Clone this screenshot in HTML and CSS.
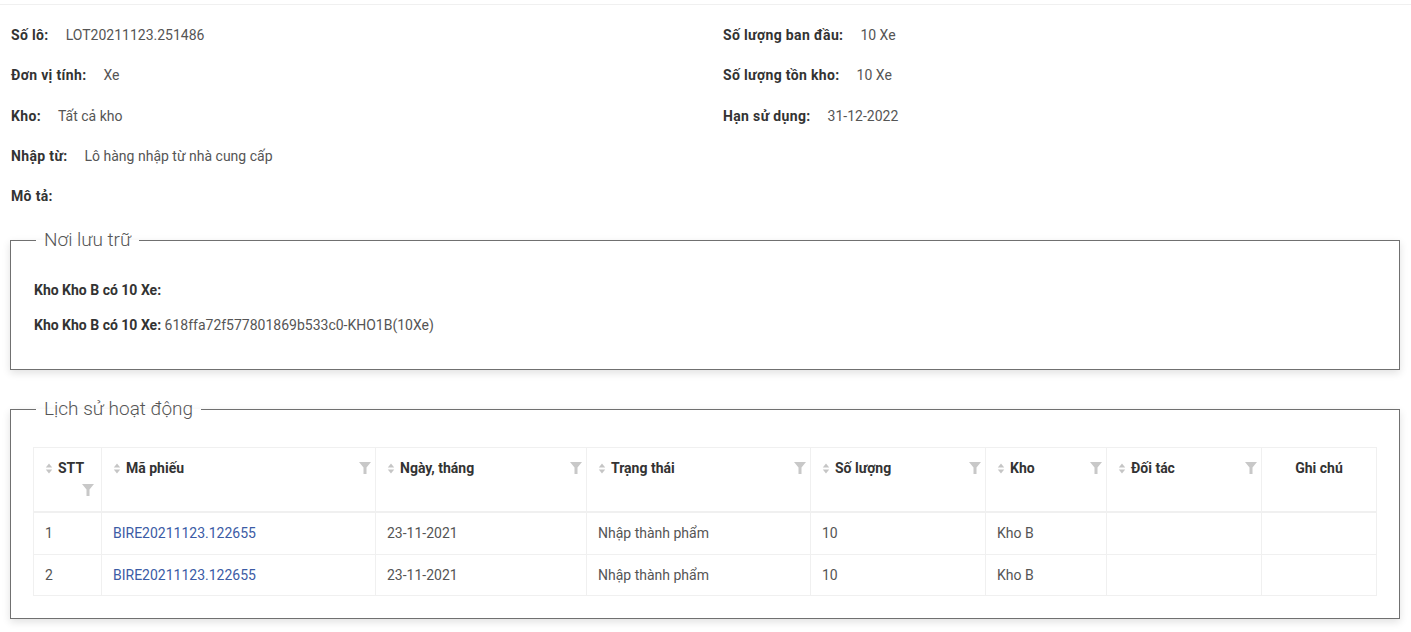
FILE: index.html
```html
<!DOCTYPE html>
<html lang="vi">
<head>
<meta charset="utf-8">
<title>Chi tiết lô hàng</title>
<link rel="stylesheet" href="styles.css">
</head>
<body>
<div class="page">
  <div class="topline"></div>
  <div class="info">
    <div class="info-col">
      <div class="info-row"><span class="lbl">Số lô:</span><span class="val">LOT20211123.251486</span></div>
      <div class="info-row"><span class="lbl">Đơn vị tính:</span><span class="val">Xe</span></div>
      <div class="info-row"><span class="lbl">Kho:</span><span class="val">Tất cả kho</span></div>
      <div class="info-row"><span class="lbl">Nhập từ:</span><span class="val">Lô hàng nhập từ nhà cung cấp</span></div>
      <div class="info-row"><span class="lbl">Mô tả:</span><span class="val"></span></div>
    </div>
    <div class="info-col">
      <div class="info-row"><span class="lbl">Số lượng ban đầu:</span><span class="val">10 Xe</span></div>
      <div class="info-row"><span class="lbl">Số lượng tồn kho:</span><span class="val">10 Xe</span></div>
      <div class="info-row"><span class="lbl">Hạn sử dụng:</span><span class="val">31-12-2022</span></div>
    </div>
  </div>

  <fieldset class="box box-storage">
    <legend>Nơi lưu trữ</legend>
    <div class="storage-line"><b>Kho Kho B có 10 Xe:</b></div>
    <div class="storage-line"><b>Kho Kho B có 10 Xe:</b> 618ffa72f577801869b533c0-KHO1B(10Xe)</div>
  </fieldset>

  <fieldset class="box box-history">
    <legend>Lịch sử hoạt động</legend>
    <table class="tbl">
      <colgroup>
        <col style="width:68px"><col style="width:274px"><col style="width:211px"><col style="width:224px">
        <col style="width:175px"><col style="width:121px"><col style="width:155px"><col style="width:115px">
      </colgroup>
      <thead>
        <tr>
          <th><div class="th-in wrap"><span class="th-title"><svg class="sorter" viewBox="0 0 8 12"><path d="M4 0.5L7.5 5H0.5z"/><path d="M4 11.5L7.5 7H0.5z"/></svg>STT</span><svg class="filter" viewBox="0 0 12 12"><path d="M0 0H12L7.5 5.5V12H4.5V5.5Z"/></svg></div></th>
          <th><div class="th-in"><span class="th-title"><svg class="sorter" viewBox="0 0 8 12"><path d="M4 0.5L7.5 5H0.5z"/><path d="M4 11.5L7.5 7H0.5z"/></svg>Mã phiếu</span><svg class="filter" viewBox="0 0 12 12"><path d="M0 0H12L7.5 5.5V12H4.5V5.5Z"/></svg></div></th>
          <th><div class="th-in"><span class="th-title"><svg class="sorter" viewBox="0 0 8 12"><path d="M4 0.5L7.5 5H0.5z"/><path d="M4 11.5L7.5 7H0.5z"/></svg>Ngày, tháng</span><svg class="filter" viewBox="0 0 12 12"><path d="M0 0H12L7.5 5.5V12H4.5V5.5Z"/></svg></div></th>
          <th><div class="th-in"><span class="th-title"><svg class="sorter" viewBox="0 0 8 12"><path d="M4 0.5L7.5 5H0.5z"/><path d="M4 11.5L7.5 7H0.5z"/></svg>Trạng thái</span><svg class="filter" viewBox="0 0 12 12"><path d="M0 0H12L7.5 5.5V12H4.5V5.5Z"/></svg></div></th>
          <th><div class="th-in"><span class="th-title"><svg class="sorter" viewBox="0 0 8 12"><path d="M4 0.5L7.5 5H0.5z"/><path d="M4 11.5L7.5 7H0.5z"/></svg>Số lượng</span><svg class="filter" viewBox="0 0 12 12"><path d="M0 0H12L7.5 5.5V12H4.5V5.5Z"/></svg></div></th>
          <th><div class="th-in"><span class="th-title"><svg class="sorter" viewBox="0 0 8 12"><path d="M4 0.5L7.5 5H0.5z"/><path d="M4 11.5L7.5 7H0.5z"/></svg>Kho</span><svg class="filter" viewBox="0 0 12 12"><path d="M0 0H12L7.5 5.5V12H4.5V5.5Z"/></svg></div></th>
          <th><div class="th-in"><span class="th-title"><svg class="sorter" viewBox="0 0 8 12"><path d="M4 0.5L7.5 5H0.5z"/><path d="M4 11.5L7.5 7H0.5z"/></svg>Đối tác</span><svg class="filter" viewBox="0 0 12 12"><path d="M0 0H12L7.5 5.5V12H4.5V5.5Z"/></svg></div></th>
          <th class="center">Ghi chú</th>
        </tr>
      </thead>
      <tbody>
        <tr>
          <td>1</td><td><a class="link" href="#">BIRE20211123.122655</a></td><td>23-11-2021</td><td>Nhập thành phẩm</td><td>10</td><td>Kho B</td><td></td><td></td>
        </tr>
        <tr>
          <td>2</td><td><a class="link" href="#">BIRE20211123.122655</a></td><td>23-11-2021</td><td>Nhập thành phẩm</td><td>10</td><td>Kho B</td><td></td><td></td>
        </tr>
      </tbody>
    </table>
  </fieldset>
</div>
</body>
</html>
```

FILE: styles.css
```css
* { box-sizing: border-box; }
html, body { margin: 0; padding: 0; background: #fff; }
body {
  font-family: Roboto, "Liberation Sans", sans-serif;
  font-size: 14px;
  color: #555;
}
.page { padding: 0 11px 20px 10px; }
.topline { height: 5px; border-bottom: 1px solid #f0f0f0; margin: 0 -11px 0 -10px; }

.info {
  display: grid;
  grid-template-columns: 712px 1fr;
  padding: 20px 0 0 1px;
}
.info-col { display: flex; flex-direction: column; gap: 20.3px; }
.info-row { display: flex; gap: 17px; line-height: 20px; height: 20px; }
.lbl { font-weight: 700; color: #333; letter-spacing: 0.35px; }
.val { color: #555; }

.box {
  margin: 0;
  border: 1px solid #707070;
  box-shadow: 0 3px 8px rgba(0,0,0,0.12);
  min-width: 0;
}
.box legend {
  font-size: 19px;
  font-weight: 300;
  color: #555;
  line-height: 24px;
  padding: 0 8px;
  margin-left: 2px;
}
.box-storage { margin-top: 22px; padding: 0 23px 34px; }
.storage-line { line-height: 20px; margin-top: 15px; color: #555; }
.storage-line:first-of-type { margin-top: 28px; }
.storage-line b { color: #333; }

.box-history { margin-top: 27px; padding: 26px 22px 22px; }
.box-history legend { margin-left: 3px; }

.tbl {
  width: 100%;
  border-collapse: collapse;
  table-layout: fixed;
  border: 1px solid #f0f0f0;
}
.tbl th {
  text-align: left;
  vertical-align: top;
  font-weight: 700;
  color: #333;
  padding: 9px 4px 10px 11px;
  line-height: 22px;
  border-left: 1px solid #f0f0f0;
  border-bottom: 2px solid #f0f0f0;
  background: #fff;
}
.tbl th.center { text-align: center; padding-left: 4px; }
.th-in { display: flex; flex-wrap: wrap; align-items: center; justify-content: space-between; }
.th-in.wrap { flex-direction: column; align-items: stretch; }
.th-in.wrap .filter { align-self: flex-end; margin-top: 5px; margin-right: 3px; }
.th-title { display: inline-flex; align-items: center; white-space: nowrap; }
.sorter { width: 8px; height: 11px; fill: #c5c5c5; margin-right: 5px; }
.filter { width: 12px; height: 12px; fill: #c8c8c8; margin-left: auto; margin-top: 5px; margin-bottom: 5px; }
.tbl td {
  padding: 10px 11px 10.5px;
  line-height: 20px;
  border-left: 1px solid #f0f0f0;
  border-bottom: 1px solid #f0f0f0;
  color: #555;
}
.link { color: #3b5ba5; text-decoration: none; }
```
